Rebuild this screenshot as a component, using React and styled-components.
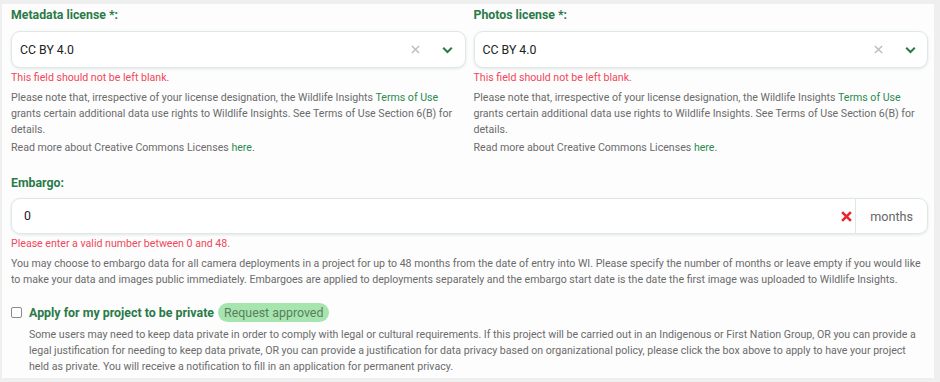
import React from "react";
import styled, { createGlobalStyle } from "styled-components";

const GlobalStyle = createGlobalStyle`
  html, body {
    margin: 0;
    padding: 0;
    background: #efefef;
    font-family: Roboto, "Liberation Sans", sans-serif;
  }
`;

const green = "#2a7a48";
const linkGreen = "#2b8a50";
const red = "#f0475a";
const gray = "#6b6b6b";

const Page = styled.div`
  width: 940px;
  height: 382px;
  padding: 4px 6px 4px 2px;
  box-sizing: border-box;
`;

const Panel = styled.div`
  background: #fdfdfd;
  height: 100%;
  box-sizing: border-box;
  padding: 2px 6px 0 9px;
  overflow: hidden;
`;

const Columns = styled.div`
  display: grid;
  grid-template-columns: 1fr 1fr;
  column-gap: 8px;
`;

const Field = styled.div`
  display: flex;
  flex-direction: column;
`;

const Label = styled.div`
  color: ${green};
  font-weight: 700;
  font-size: 12.3px;
  line-height: 18px;
  margin-bottom: ${(p) => p.gap || 7}px;
`;

const Box = styled.div`
  display: flex;
  align-items: center;
  height: ${(p) => p.h || 37}px;
  box-sizing: border-box;
  background: #fff;
  border: 1px solid #dfe8e5;
  border-radius: 9px;
  box-shadow: 0 1px 3px rgba(40, 80, 70, 0.12);
  font-size: 12.3px;
  color: #222;
`;

const Value = styled.div`
  flex: 1;
  padding-left: ${(p) => p.pad || 8}px;
`;

const IconSlot = styled.div`
  display: flex;
  align-items: center;
  justify-content: center;
  width: ${(p) => p.w}px;
  height: 100%;
`;

const Addon = styled.div`
  height: 100%;
  display: flex;
  align-items: center;
  padding: 0 14px;
  border-left: 1px solid #dfe8e5;
  color: #666;
  font-size: 12.6px;
`;

const Error = styled.div`
  color: ${red};
  font-size: 10.6px;
  line-height: 16px;
  margin-top: 2px;
`;

const Help = styled.p`
  margin: ${(p) => p.mt || 2}px 0 0;
  color: ${gray};
  font-size: 10.6px;
  line-height: 16px;
`;

const Link = styled.a`
  color: ${linkGreen};
  text-decoration: none;
`;

const Section = styled.div`
  margin-top: ${(p) => p.mt}px;
`;

const CheckRow = styled.label`
  display: flex;
  align-items: center;
  height: 19px;
  gap: 7px;
`;

const Check = styled.span`
  width: 9px;
  height: 9px;
  border: 1px solid #8a8a8a;
  border-radius: 2px;
  background: #fff;
`;

const CheckLabel = styled.span`
  color: ${green};
  font-weight: 700;
  font-size: 12.4px;
`;

const Badge = styled.span`
  background: #a6e5ae;
  color: #5b7d62;
  font-size: 12.4px;
  line-height: 19px;
  padding: 0 6px;
  border-radius: 10px;
  margin-left: -3px;
`;

const Indented = styled.div`
  padding-left: 18px;
`;

const ClearIcon = ({ color = "#bdbdbd", width = 1.6, size = 9 }) => (
  <svg width={size} height={size} viewBox="0 0 10 10">
    <path d="M1 1 L9 9 M9 1 L1 9" stroke={color} strokeWidth={width} strokeLinecap="butt" />
  </svg>
);

const Chevron = () => (
  <svg width="11" height="8" viewBox="0 0 11 8">
    <path d="M1.2 1.8 L5.5 6 L9.8 1.8" fill="none" stroke={green} strokeWidth="2" />
  </svg>
);

const LicenseField = ({ label }) => (
  <Field>
    <Label>{label}</Label>
    <Box>
      <Value>CC BY 4.0</Value>
      <IconSlot w={30}>
        <ClearIcon />
      </IconSlot>
      <IconSlot w={34}>
        <Chevron />
      </IconSlot>
    </Box>
    <Error>This field should not be left blank.</Error>
    <Help mt={4}>
      Please note that, irrespective of your license designation, the Wildlife Insights{" "}
      <Link>Terms of Use</Link> grants certain additional data use rights to Wildlife Insights. See
      Terms of Use Section 6(B) for details.
    </Help>
    <Help>
      Read more about Creative Commons Licenses <Link>here</Link>.
    </Help>
  </Field>
);

export default function App() {
  return (
    <>
      <GlobalStyle />
      <Page>
        <Panel>
          <Columns>
            <LicenseField label="Metadata license *:" />
            <LicenseField label="Photos license *:" />
          </Columns>

          <Section mt={18}>
            <Label gap={6}>Embargo:</Label>
            <Box h={36}>
              <Value pad={12}>0</Value>
              <IconSlot w={18}>
                <ClearIcon color="#e8262e" width={2.4} size={11} />
              </IconSlot>
              <Addon>months</Addon>
            </Box>
            <Error>Please enter a valid number between 0 and 48.</Error>
            <Help mt={4}>
              You may choose to embargo data for all camera deployments in a project for up to 48
              months from the date of entry into WI. Please specify the number of months or leave
              empty if you would like to make your data and images public immediately. Embargoes are
              applied to deployments separately and the embargo start date is the date the first image
              was uploaded to Wildlife Insights.
            </Help>
          </Section>

          <Section mt={15}>
            <CheckRow>
              <Check />
              <CheckLabel>Apply for my project to be private</CheckLabel>
              <Badge>Request approved</Badge>
            </CheckRow>
            <Indented>
              <Help mt={5}>
                Some users may need to keep data private in order to comply with legal or cultural
                requirements. If this project will be carried out in an Indigenous or First Nation
                Group, OR you can provide a legal justification for needing to keep data private, OR
                you can provide a justification for data privacy based on organizational policy,
                please click the box above to apply to have your project held as private. You will
                receive a notification to fill in an application for permanent privacy.
              </Help>
            </Indented>
          </Section>
        </Panel>
      </Page>
    </>
  );
}
